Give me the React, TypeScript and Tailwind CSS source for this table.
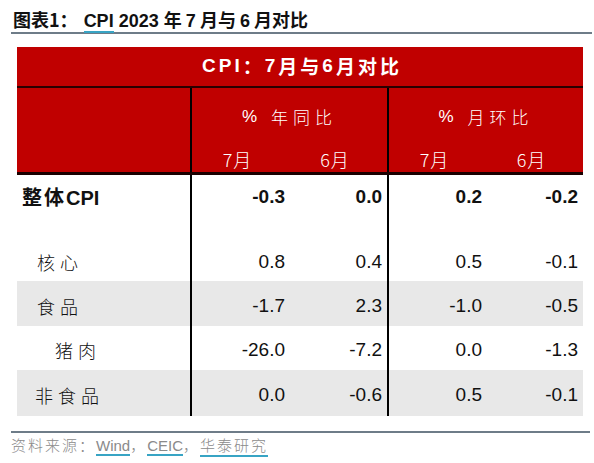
import React from "react";

const num = "font-['Liberation_Sans',Arial,sans-serif]";
const cjk = "font-['Noto_Sans_CJK_SC','Noto_Sans',sans-serif]";

type Row = { label: string; indent: string; vals: string[]; bold?: boolean; gray?: boolean; h: string; align: string };

const rows: Row[] = [
  { label: "整体CPI", indent: "pl-[5px]", vals: ["-0.3", "0.0", "0.2", "-0.2"], bold: true, h: "h-[40px]", align: "items-center pt-[4px]" },
  { label: "核心", indent: "pl-[20px]", vals: ["0.8", "0.4", "0.5", "-0.1"], h: "h-[66px]", align: "items-end pb-[5px]" },
  { label: "食品", indent: "pl-[20px]", vals: ["-1.7", "2.3", "-1.0", "-0.5"], gray: true, h: "h-[45px]", align: "items-center pt-[5px]" },
  { label: "猪肉", indent: "pl-[38px]", vals: ["-26.0", "-7.2", "0.0", "-1.3"], h: "h-[44px]", align: "items-center pt-[5px]" },
  { label: "非食品", indent: "pl-[18px]", vals: ["0.0", "-0.6", "0.5", "-0.1"], gray: true, h: "h-[46px]", align: "items-center pt-[4px]" },
];

const colBorder = ["", "border-l-2 border-black", "", "border-l-2 border-black", ""];
const colPad = ["", "pr-[4px]", "pr-[5px]", "pr-[4px]", "pr-[5px]"];

export default function App() {
  return (
    <div className="w-[594px] h-[463px] bg-white relative overflow-hidden">
      {/* title */}
      <div className="pl-[13px] pt-[8px] h-[32px]">
        <div className={`${cjk} text-[18px] font-bold text-[#111] leading-[22px] whitespace-nowrap`}>
          图表1：<span className={`${num} ml-[6px] border-b-2 border-[#38a4c4]`}>CPI</span>
          <span className={num}> 2023 </span>年 <span className={num}>7</span> 月与 <span className={num}>6</span> 月对比
        </div>
      </div>
      <div className="ml-[11px] mr-[2px] h-[2px] bg-[#6e7c88]" />

      {/* table */}
      <div className="ml-[17px] mt-[13px] w-[566px]">
        <div className={`h-[41px] bg-[#c00000] border-b-2 border-[#2a0000] flex items-center justify-center text-white text-[19px] font-bold ${cjk} tracking-[3px] pl-[4px]`}>
          <span className={num}>CPI</span>：<span className={num}>7</span>月与<span className={num}>6</span>月对比
        </div>
        <div className="grid grid-cols-[173px_99px_98px_99px_97px] bg-[#c00000] border-b-[3px] border-[#1a0000] text-white">
          <div className="row-span-2" />
          <div className={`col-span-2 h-[52px] flex items-center justify-center border-l-2 border-black ${cjk} font-light text-[17px] tracking-[5px] pt-[5px]`}>
            <span className={num}>%</span>&nbsp;年同比
          </div>
          <div className={`col-span-2 h-[52px] flex items-center justify-center border-l-2 border-black ${cjk} font-light text-[17px] tracking-[5px] pt-[5px]`}>
            <span className={num}>%</span>&nbsp;月环比
          </div>
          {["7月", "6月", "7月", "6月"].map((m, i) => (
            <div
              key={i}
              className={`h-[32px] flex items-center justify-center ${i === 0 || i === 2 ? "border-l-2 border-black" : ""} ${cjk} font-light text-[18px] tracking-[1px] pr-[6px] pt-[7px]`}
            >
              {m}
            </div>
          ))}
        </div>
        {rows.map((r, ri) => (
          <div key={ri} className={`grid grid-cols-[173px_99px_98px_99px_97px] ${r.gray ? "bg-[#e8e8e8]" : "bg-white"} text-[#111]`}>
            <div className={`${r.h} flex ${r.align} ${r.indent}`}>
              {r.bold ? (
                <span className={`${cjk} font-bold text-[20px] tracking-[2px]`}>
                  整体<span className={`${num} tracking-normal`}>CPI</span>
                </span>
              ) : (
                <span className={`${cjk} font-light text-[18px] tracking-[5px]`}>{r.label}</span>
              )}
            </div>
            {r.vals.map((v, vi) => (
              <div
                key={vi}
                className={`${r.h} flex ${r.align} justify-end ${colBorder[vi + 1]} ${colPad[vi + 1]} ${num} text-[19px] ${r.bold ? "font-bold" : ""}`}
              >
                {v}
              </div>
            ))}
          </div>
        ))}
      </div>

      <div className="ml-[11px] mr-[4px] mt-[15px] h-[2px] bg-[#6e7c88]" />
      <div className={`pl-[11px] pt-[1px] text-[15px] text-[#8a8a8a] ${cjk} font-light tracking-[2px] whitespace-nowrap`}>
        资料来源：<span className={`${num} border-b-2 border-[#38a4c4] tracking-normal`}>Wind</span>，
        <span className={`${num} border-b-2 border-[#38a4c4] tracking-normal`}>CEIC</span>，
        <span className="border-b-2 border-[#38a4c4]">华泰研究</span>
      </div>
    </div>
  );
}
